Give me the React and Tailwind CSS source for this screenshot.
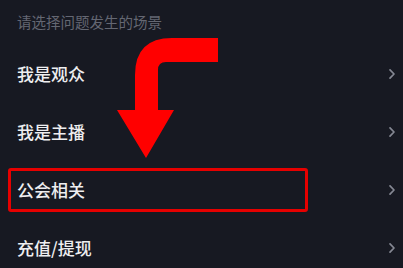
import React from "react";

const rows = ["我是观众", "我是主播", "公会相关", "充值/提现"];

const Chevron = () => (
  <svg width="8" height="12" viewBox="0 0 8 12" fill="none">
    <path
      d="M2 1.8 L6 6 L2 10.2"
      stroke="#858893"
      strokeWidth="1.7"
      strokeLinecap="round"
      strokeLinejoin="round"
    />
  </svg>
);

const Arrow = () => (
  <svg
    className="absolute left-0 top-0 pointer-events-none"
    width="403"
    height="268"
    viewBox="0 0 403 268"
  >
    <path
      d="M218 38 L172 38 Q135 38 135 75 L135 110 L117 110 L146 158 L174 110 L158 110 L158 70 Q158 62 166 62 L218 62 Z"
      fill="#ff0000"
    />
  </svg>
);

export default function App() {
  return (
    <div
      className="relative w-[403px] h-[268px] overflow-hidden bg-[#171922]"
      style={{ fontFamily: '"Noto Sans CJK SC", "Noto Sans", sans-serif' }}
    >
      <div className="h-[45px] pl-[17px] pt-[12px] text-[14.5px] leading-[20px] text-[#646772]">
        请选择问题发生的场景
      </div>
      {rows.map((label, i) => (
        <div
          key={label}
          className="relative flex h-[58px] items-center justify-between pl-[17px] pr-[7px]"
        >
          <span className="text-[17px] font-medium text-[#eeeef0]">{label}</span>
          <Chevron />
          {i === 2 && (
            <div className="absolute left-[8px] top-[7px] h-[44px] w-[300px] rounded-[3px] border-[3px] border-[#e60000]" />
          )}
        </div>
      ))}
      <Arrow />
    </div>
  );
}
